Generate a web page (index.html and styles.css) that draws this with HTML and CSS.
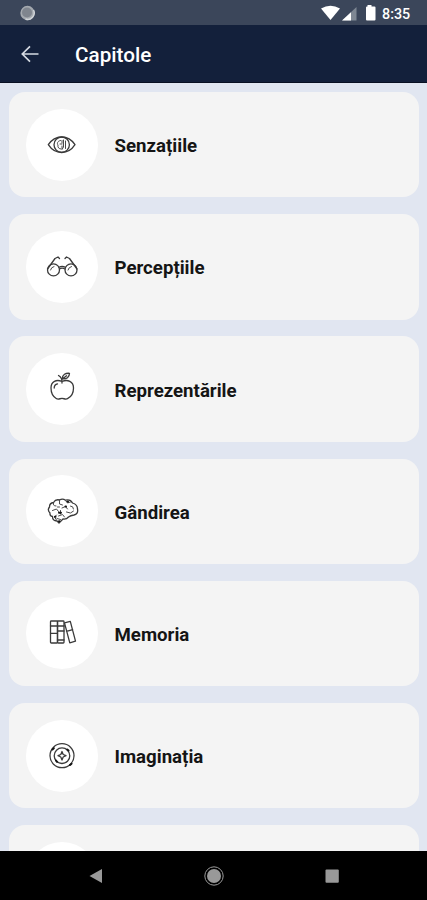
FILE: index.html
```html
<!DOCTYPE html>
<html lang="ro">
<head>
<meta charset="utf-8">
<title>Capitole</title>
<link rel="stylesheet" href="styles.css">
</head>
<body>
<div class="screen">
  <div class="status">
    <svg class="sync" viewBox="0 0 16 16"><circle cx="7.500" cy="8" r="7.200" fill="#a4a9af"/><path d="M13.500 5A6.500 6.500 0 0 1 5.500 14" fill="none" stroke="#d0d4d8" stroke-width="1.500"/><circle cx="7" cy="7.500" r="5" fill="#7f858e"/></svg>
    <svg class="signals" viewBox="0 0 56 18">
      <path d="M0 4.500Q9.500-1 19 4.500L9.500 16Z" fill="#fff"/>
      <path d="M35.500 3V16.500H21Z" fill="#7e8793"/><path d="M30 8.200V16.500H21Z" fill="#fff"/>
      <path d="M46.500 1h4v1.500h3a1 1 0 0 1 1 1V15.500a1 1 0 0 1-1 1h-7.500a1 1 0 0 1-1-1V3.500a1 1 0 0 1 1-1h.500Z" fill="#fff"/>
    </svg>
    <span class="time">8:35</span>
  </div>
  <header class="bar">
    <svg class="back" viewBox="0 0 18 18"><path d="M17.500 9H1.500M9 1.300L1.300 9L9 16.700" fill="none" stroke="#d5dae2" stroke-width="1.700"/></svg>
    <h1>Capitole</h1>
  </header>
  <main class="list">
    <div class="card">
      <div class="disc"><svg viewBox="0.5 0 50 50"><path d="M11.800 24.700Q17 17 25.200 17T38.500 24.700Q33.500 32.500 25.200 32.500T11.800 24.700Z"/><circle cx="25.200" cy="24.700" r="7.700"/><path class="fine" d="M24 20.500C20.500 21 20.500 24 21.500 25C21 27.500 22.500 29 24.500 29M23.500 24H25.500M25.500 20.500V23M25.500 26V28.500M29 21V28.500M27 20V27L25.500 29.500"/></svg></div>
      <span class="name">Senzațiile</span>
    </div>
    <div class="card">
      <div class="disc"><svg viewBox="0.5 0 50 50"><circle cx="17" cy="27.900" r="6"/><circle cx="34.500" cy="27.900" r="6"/><path d="M22.500 25.300Q25.500 23.500 29 25.300M23 27Q25.500 25.300 28.500 27M23 16.500L21.500 15L18.500 16.500L11 27M28.500 16.500L30 15L33 16.500L40.500 27"/><path class="fine" d="M14 28Q14.500 25.200 17.500 24.500M31.500 28Q32 25.200 35 24.500"/></svg></div>
      <span class="name">Percepțiile</span>
    </div>
    <div class="card">
      <div class="disc"><svg viewBox="0.5 2 50 50"><path d="M25.500 19.500C20 17 14.500 19.500 14.500 26C14.500 31 17 35 20 36.700C22 37.700 23.500 36.400 25.500 36.400S29 37.700 31 36.700C34.500 35 37 31 37 26C37 19.500 31 17 25.500 19.500ZM25.500 21C25.800 17.500 24.500 14.800 22 13.500M25.800 16.800C26 12.500 29 11 33 11.300C33 15 30 17.500 25.800 16.800ZM26 17L30 13.800M17.700 26Q17.700 22.500 21 21.800"/></svg></div>
      <span class="name">Reprezentările</span>
    </div>
    <div class="card">
      <div class="disc"><svg viewBox="0.5 0 50 50"><path d="M13.500 27Q10.500 24 13 21Q13 17 17 16.500Q19 13 23 14Q26 12 29 14.200Q34 13 36 17Q41 18.500 41 23Q42 28 37.500 29Q34 29.500 32 31Q30 33.500 26.500 33L22.500 37L20.500 35Q16 35 16 30.500Q13 30 13.500 27Z"/><path class="fine" d="M17 17Q16 20 19.500 20M23 14V18L26 19M29 14.500L31 17L34 16M16 24.500L20 23L22 25.500M20 29L18 31L20 34M22 30L26 28.500L28 31M25.500 22L29 20.500L31 23M34 20Q37 20 37 23M30 26L34 27L37 25M24 24.500V28M23 21H21M20.500 32.500L24 33.500"/><path class="bold" d="M31 15.500L31.500 15.800M22.500 26.700H24.500M29 20.500H29.500M18.500 30.700H19M22.500 35.200H22.800"/></svg></div>
      <span class="name">Gândirea</span>
    </div>
    <div class="card">
      <div class="disc"><svg viewBox="0.5 0 50 50"><rect x="14" y="13" width="7" height="22" rx=".8"/><rect x="21" y="13" width="6.500" height="22" rx=".8"/><path d="M14 18H27.500M14 25.300H21M21 23H27.500M21 32H27.500M28 14.800L33.800 13.300L39 33.200L33.300 34.800ZM30 23.300L36.200 21.600"/></svg></div>
      <span class="name">Memoria</span>
    </div>
    <div class="card">
      <div class="disc"><svg viewBox="0.5 0 50 50"><circle cx="25.500" cy="24.700" r="12"/><circle cx="25.500" cy="24.700" r="7.800"/><path d="M25.500 20.500L26.700 23.500L29.500 24.700L26.700 26L25.500 29L24.300 26L21.500 24.700L24.300 23.500Z"/><path class="bold" d="M16 18.500L17.300 17.300M30.800 18.500L32 19.500M33.500 34L35 32.700M19.500 29.500L20.500 30.800"/></svg></div>
      <span class="name">Imaginația</span>
    </div>
    <div class="card"><div class="disc"></div></div>
  </main>
  <nav class="nav">
    <svg viewBox="0 0 20 20"><path d="M3.500 10L16 3V17Z"/></svg>
    <svg viewBox="0 0 20 20"><circle cx="10" cy="10" r="7"/><circle cx="10" cy="10" r="9.200" fill="none" stroke="#999" stroke-width="1"/></svg>
    <svg viewBox="0 0 20 20"><rect x="3.500" y="3.500" width="13.300" height="13.300" rx="1"/></svg>
  </nav>
</div>
</body>
</html>
```
FILE: styles.css
```css
* { box-sizing: border-box; }
body { margin: 0; font-family: Roboto, "Noto Sans", sans-serif; }
.screen {
  width: 427px;
  height: 900px;
  display: flex;
  flex-direction: column;
  overflow: hidden;
  background: #e1e6f1;
}
.status {
  flex: none;
  height: 25px;
  display: flex;
  align-items: center;
  padding: 1px 16px 0 20px;
  background: #3b465a;
}
.sync { width: 16px; height: 16px; }
.signals { width: 56px; height: 18px; margin-left: auto; }
.time {
  width: 29px;
  margin-left: 5px;
  padding-top: 1px;
  font-size: 14.300px;
  font-weight: 500;
  color: #fff;
  white-space: nowrap;
}
.bar {
  flex: none;
  height: 58px;
  display: flex;
  align-items: center;
  padding: 1px 21px 0;
  background: #13203b;
  border-bottom: 1px solid #091022;
}
.back { width: 18px; height: 18px; }
.bar h1 {
  margin: 0 0 0 36px;
  padding-top: 2px;
  font-size: 20.700px;
  font-weight: 500;
  line-height: 28px;
  color: #fff;
}
.list {
  flex: 1;
  min-height: 0;
  overflow: hidden;
  display: flex;
  flex-direction: column;
  gap: 16.800px;
  padding: 9px 8px 0 9px;
}
.card {
  flex: none;
  height: 105.400px;
  display: flex;
  align-items: center;
  gap: 17px;
  padding-left: 16.500px;
  border-radius: 16px;
  background: #f4f4f4;
}
.disc {
  width: 72px;
  height: 72px;
  display: flex;
  align-items: center;
  justify-content: center;
  border-radius: 50%;
  background: #fff;
}
.disc svg {
  width: 50px;
  height: 50px;
  fill: none;
  stroke: #3a3a3a;
  stroke-width: 1.300;
  stroke-linejoin: round;
  stroke-linecap: round;
}
.disc .fine { stroke: #4a4a4a; stroke-width: 1; }
.disc .bold { stroke: #151515; stroke-width: 2; }
.name {
  padding-top: 3px;
  font-size: 18.650px;
  font-weight: 700;
  line-height: 24px;
  color: #151515;
}
.nav {
  flex: none;
  height: 49px;
  display: flex;
  align-items: center;
  justify-content: space-between;
  padding: 0 85px 0 86px;
  background: #000;
}
.nav svg { width: 20px; height: 20px; fill: #999; }
```
